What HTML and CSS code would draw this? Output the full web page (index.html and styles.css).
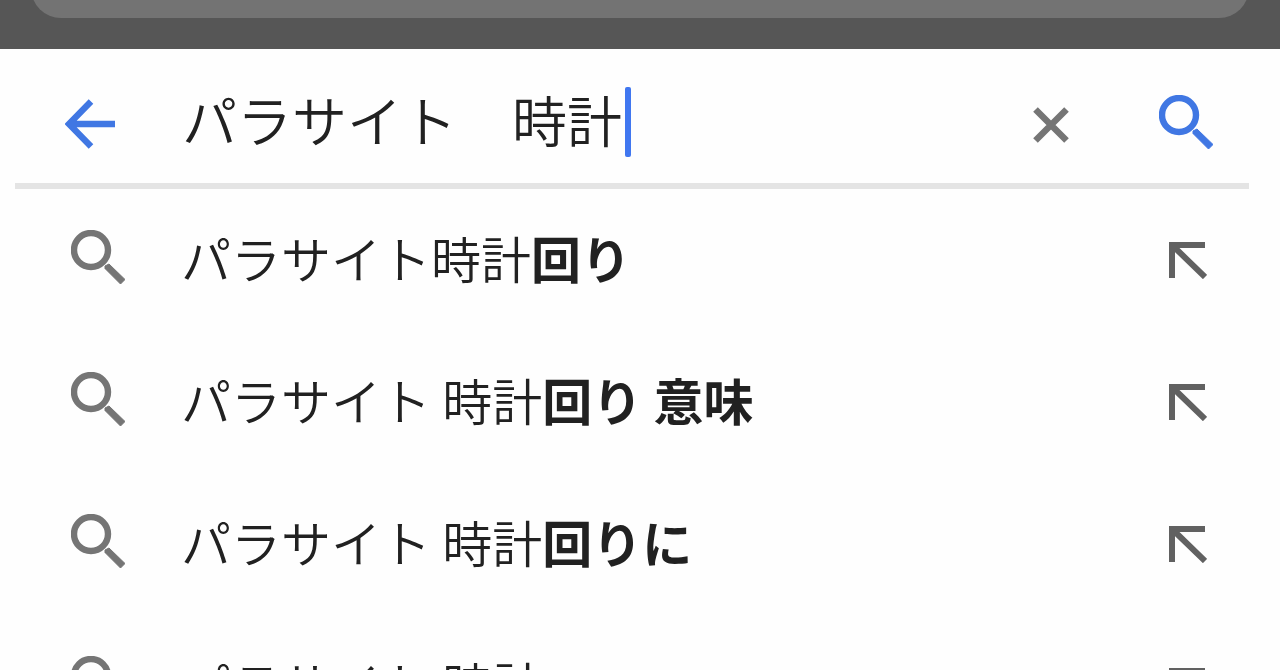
FILE: index.html
```html
<!DOCTYPE html>
<html lang="ja">
<head>
    <meta charset="utf-8">
    <meta name="viewport" content="width=device-width, initial-scale=1">
    <title>パラサイト 時計</title>
    <link rel="stylesheet" href="styles.css">
</head>
<body>
    <svg class="sprite" aria-hidden="true">
        <symbol id="search" viewBox="0 0 54 54">
            <circle cx="20" cy="20" r="17" fill="none" stroke="currentColor" stroke-width="6.400"/>
            <path d="M34 36L38 34L54 49.500L49.500 54L34 38.500Z" fill="currentColor" stroke="currentColor" stroke-width="1"/>
        </symbol>
        <symbol id="insert" viewBox="0 0 38 38">
            <path d="M36 4H3V37M3 4L36 36" fill="none" stroke="currentColor" stroke-width="6"/>
        </symbol>
    </svg>

    <div class="browser-bar"><div class="address"></div></div>

    <form class="search-bar">
        <button class="icon-btn back" type="button" aria-label="戻る">
            <svg width="50" height="50" viewBox="0 0 50 50"><path d="M26 2.500L4 25L26 47.500M4 25H50" fill="none" stroke="currentColor" stroke-width="6.400"/></svg>
        </button>
        <input class="query" type="text" value="パラサイト　時計" aria-label="検索">
        <span class="caret"></span>
        <button class="icon-btn clear" type="button" aria-label="消去">
            <svg width="36" height="36" viewBox="0 0 36 36"><path d="M2.500 2.500L33.500 33.500M33.500 2.500L2.500 33.500" fill="none" stroke="currentColor" stroke-width="6.500"/></svg>
        </button>
        <button class="icon-btn submit" type="submit" aria-label="検索する">
            <svg width="54" height="54"><use href="#search"/></svg>
        </button>
    </form>

    <ul class="suggestions">
        <li>
            <svg class="lens" width="54" height="54"><use href="#search"/></svg>
            <a href="#">パラサイト時計<b>回り</b></a>
            <button class="icon-btn" type="button" aria-label="入力"><svg width="38" height="38"><use href="#insert"/></svg></button>
        </li>
        <li>
            <svg class="lens" width="54" height="54"><use href="#search"/></svg>
            <a href="#">パラサイト 時計<b>回り 意味</b></a>
            <button class="icon-btn" type="button" aria-label="入力"><svg width="38" height="38"><use href="#insert"/></svg></button>
        </li>
        <li>
            <svg class="lens" width="54" height="54"><use href="#search"/></svg>
            <a href="#">パラサイト 時計<b>回りに</b></a>
            <button class="icon-btn" type="button" aria-label="入力"><svg width="38" height="38"><use href="#insert"/></svg></button>
        </li>
        <li>
            <svg class="lens" width="54" height="54"><use href="#search"/></svg>
            <a href="#">パラサイト 時計</a>
            <button class="icon-btn" type="button" aria-label="入力"><svg width="38" height="38"><use href="#insert"/></svg></button>
        </li>
    </ul>
</body>
</html>
```
FILE: styles.css
```css
* { box-sizing: border-box; margin: 0; padding: 0; }
body {
    height: 100vh;
    overflow: hidden;
    background: #fefefe;
    color: #212121;
    font-family: "Noto Sans CJK JP", sans-serif;
}
.sprite { display: none; }
svg { display: block; flex: none; }

.browser-bar {
    display: flex;
    align-items: flex-end;
    height: 49px;
    padding: 0 31px 31px;
    overflow: hidden;
    background: #565656;
}
.address {
    flex: 1;
    height: 80px;
    border-radius: 30px;
    background: #737373;
}

.icon-btn {
    flex: none;
    border: none;
    background: none;
    color: #616161;
    cursor: pointer;
}
.search-bar {
    display: flex;
    align-items: center;
    margin: 0 31px 0 15px;
    padding: 12px 36px 0 50px;
    height: 140px;
    border-bottom: 6px solid #e4e4e4;
}
.back, .submit { color: #4077e3; }
.back { padding-top: 3px; }
.query {
    width: 8em;
    height: 80px;
    margin-left: 67px;
    padding-bottom: 8px;
    border: none;
    outline: none;
    background: none;
    color: inherit;
    font-family: inherit;
    font-size: 55px;
    font-weight: 350;
}
.caret {
    width: 6px;
    height: 70px;
    margin-left: 3px;
    border-radius: 2px;
    background: #4077f0;
}
.clear { margin-left: auto; padding-top: 6px; color: #757575; }
.submit { margin-left: 90px; }

.suggestions { list-style: none; }
.suggestions li {
    display: flex;
    align-items: center;
    height: 142px;
    padding: 0 73px 0 71px;
}
.lens { margin-bottom: 6px; color: #757575; }
.suggestions a {
    flex: 1;
    margin-left: 56px;
    padding-bottom: 6px;
    color: inherit;
    font-size: 50px;
    font-weight: 350;
    line-height: 72px;
    text-decoration: none;
    white-space: nowrap;
}
.suggestions b { font-weight: 700; }
```
